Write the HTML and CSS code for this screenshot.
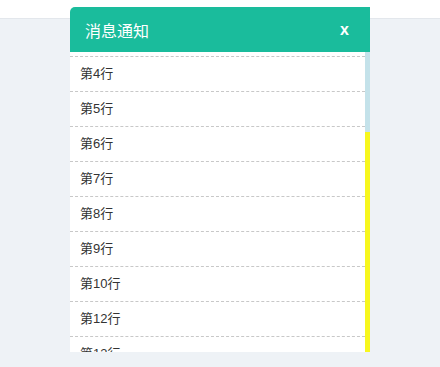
FILE: index.html
```html
<!DOCTYPE html>
<html lang="zh">
<head>
<meta charset="utf-8">
<link rel="stylesheet" href="styles.css">
</head>
<body>
<div class="topbar"></div>
<div class="panel">
  <div class="panel-head">
    <span class="panel-title">消息通知</span>
    <span class="panel-close">x</span>
  </div>
  <div class="panel-body">
    <div class="list-viewport">
      <ul class="list">
        <li class="row">第4行</li>
        <li class="row">第5行</li>
        <li class="row">第6行</li>
        <li class="row">第7行</li>
        <li class="row">第8行</li>
        <li class="row">第9行</li>
        <li class="row">第10行</li>
        <li class="row">第12行</li>
        <li class="row">第13行</li>
      </ul>
    </div>
    <div class="scrollbar">
      <div class="scroll-track"></div>
      <div class="scroll-thumb"></div>
    </div>
  </div>
</div>
</body>
</html>
```
FILE: styles.css
```css
html, body {
  margin: 0;
  padding: 0;
}
body {
  background: #eef2f6;
  font-family: "Liberation Sans", "Noto Sans CJK SC", sans-serif;
  width: 440px;
  height: 367px;
  overflow: hidden;
  position: relative;
}
.topbar {
  height: 18px;
  background: #ffffff;
  border-bottom: 1px solid #e3e7ec;
}
.panel {
  position: absolute;
  left: 70px;
  top: 7px;
  width: 300px;
  display: flex;
  flex-direction: column;
}
.panel-head {
  height: 45px;
  background: #1abc9c;
  border-top-left-radius: 5px;
  display: flex;
  align-items: center;
  justify-content: space-between;
  padding: 0 21px 0 15px;
  color: #ffffff;
}
.panel-title {
  font-family: "Noto Sans CJK SC", sans-serif;
  font-size: 16px;
  line-height: 20px;
}
.panel-close {
  font-family: "Liberation Sans", sans-serif;
  font-size: 16px;
  font-weight: bold;
  line-height: 20px;
}
.panel-body {
  height: 300px;
  display: flex;
}
.list-viewport {
  flex: 1;
  background: #ffffff;
  overflow: hidden;
}
.list {
  list-style: none;
  margin: 0;
  padding: 4px 0 0 0;
}
.list::before {
  content: "";
  display: block;
  border-top: 1px dashed #c8c8c8;
}
.row {
  height: 34px;
  line-height: 34px;
  padding-left: 10px;
  border-bottom: 1px dashed #c8c8c8;
  font-size: 13px;
  color: #333333;
  font-family: "Liberation Sans", "Noto Sans CJK SC", sans-serif;
}
.scrollbar {
  width: 5px;
  display: flex;
  flex-direction: column;
}
.scroll-track {
  height: 80px;
  background: #c4e2ea;
}
.scroll-thumb {
  flex: 1;
  background: #f7f71e;
}
```
